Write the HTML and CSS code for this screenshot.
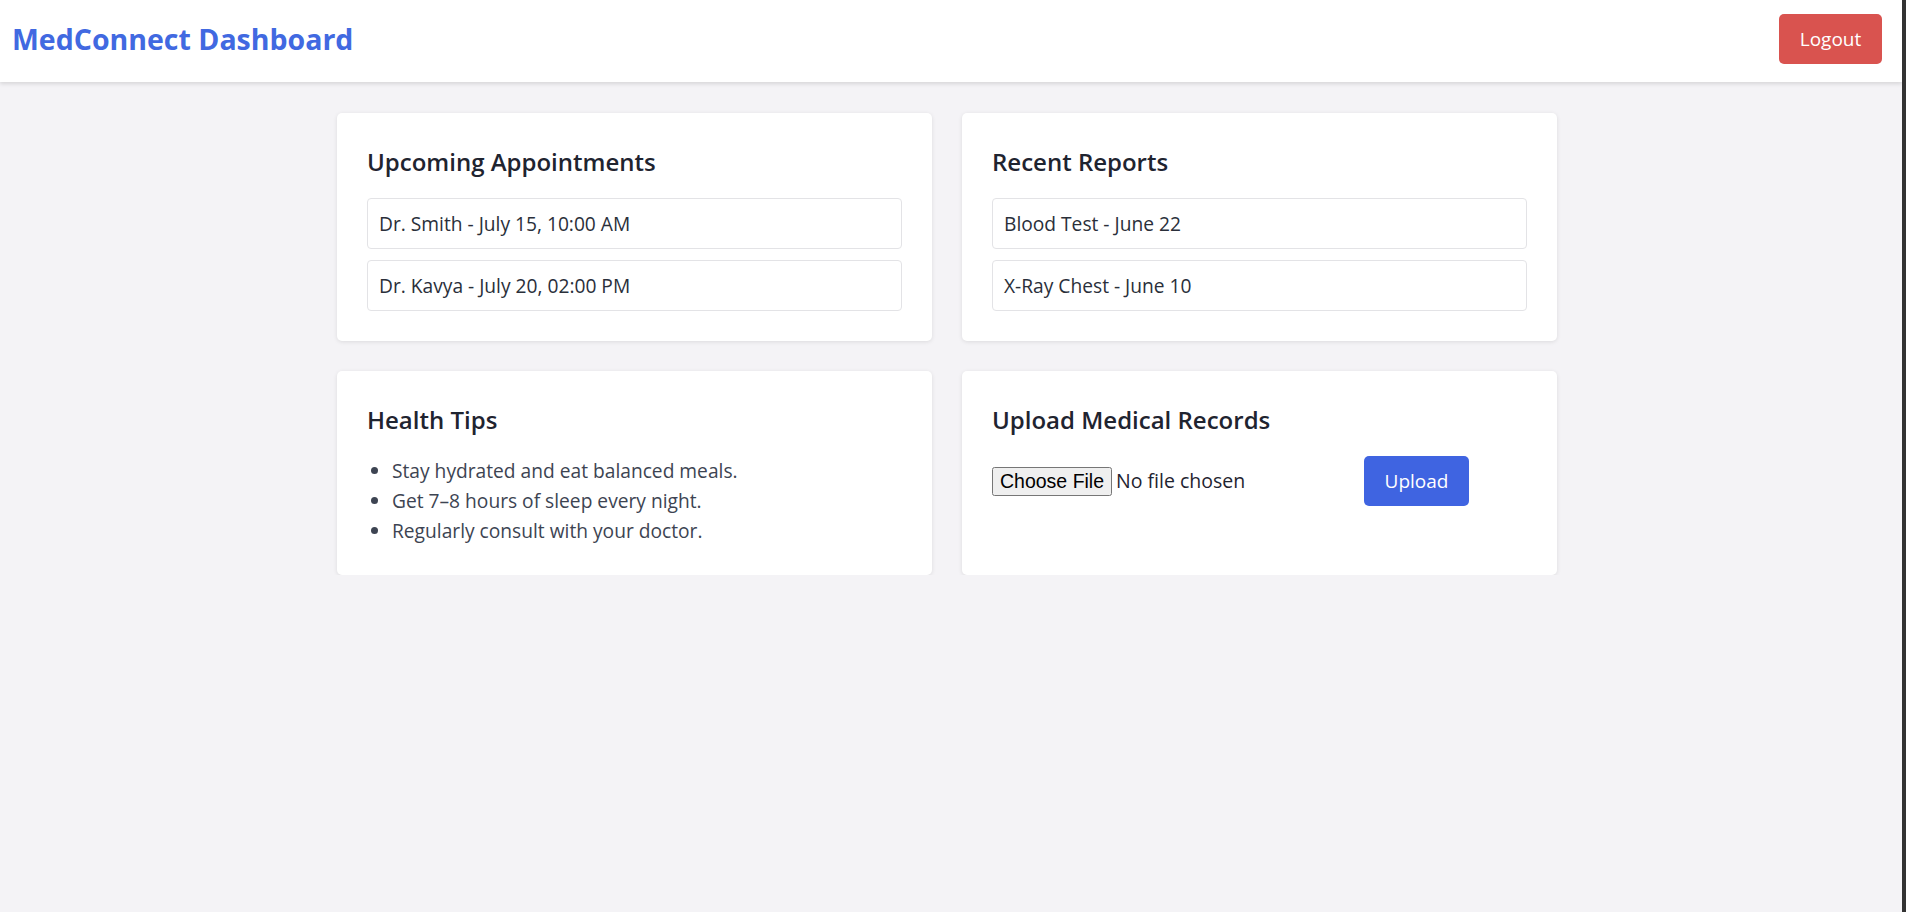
FILE: index.html
```html
<!DOCTYPE html>
<html lang="en">
<head>
<meta charset="utf-8">
<title>MedConnect Dashboard</title>
<link rel="stylesheet" href="styles.css">
</head>
<body>
  <header class="topbar">
    <h1 class="brand">MedConnect Dashboard</h1>
    <button class="btn btn-logout" type="button">Logout</button>
  </header>
  <main class="container">
    <section class="card">
      <h3 class="card-title">Upcoming Appointments</h3>
      <div class="item">Dr. Smith - July 15, 10:00 AM</div>
      <div class="item">Dr. Kavya - July 20, 02:00 PM</div>
    </section>
    <section class="card">
      <h3 class="card-title">Recent Reports</h3>
      <div class="item">Blood Test - June 22</div>
      <div class="item">X-Ray Chest - June 10</div>
    </section>
    <section class="card">
      <h3 class="card-title">Health Tips</h3>
      <ul class="tips">
        <li>Stay hydrated and eat balanced meals.</li>
        <li>Get 7–8 hours of sleep every night.</li>
        <li>Regularly consult with your doctor.</li>
      </ul>
    </section>
    <section class="card">
      <h3 class="card-title">Upload Medical Records</h3>
      <form class="upload-row">
        <input class="file-input" type="file">
        <button class="btn btn-upload" type="button">Upload</button>
      </form>
    </section>
  </main>
</body>
</html>
```

FILE: styles.css
```css
html {
  min-height: 100%;
  box-sizing: border-box;
  border-right: 4px solid #333333;
  background: #f4f3f6;
}

body {
  margin: 0;
  font-family: "Open Sans", "Noto Sans", sans-serif;
  background: #f4f3f6;
  color: #212529;
}

.topbar {
  height: 82px;
  box-sizing: border-box;
  background: #ffffff;
  box-shadow: 0 2px 4px rgba(0, 0, 0, 0.12);
  display: flex;
  align-items: center;
  justify-content: space-between;
  padding: 0 20px 5px 12px;
}

.brand {
  margin: 0;
  font-size: 28.5px;
  font-weight: 700;
  color: #4169e1;
  line-height: 36px;
}

.btn {
  border: none;
  border-radius: 5px;
  color: #ffffff;
  font-family: inherit;
  font-size: 19px;
  height: 50px;
  padding: 0 25px;
  cursor: pointer;
}

.btn-logout {
  background: #d9534f;
  width: 103px;
  padding: 0;
}

.container {
  width: 1220px;
  margin: 0 0 0 337px;
  padding-top: 31px;
  display: grid;
  grid-template-columns: 595px 595px;
  gap: 30px;
}

.card {
  background: #ffffff;
  border-radius: 5px;
  box-shadow: 0 1px 4px rgba(0, 0, 0, 0.1);
  padding: 30px;
}

.card-title {
  margin: 4px 0 21px;
  font-size: 24px;
  font-weight: 600;
  line-height: 30px;
  color: #1f2430;
}

.item {
  border: 1px solid #e3e3e6;
  border-radius: 4px;
  padding: 12px 11px;
  font-size: 19.2px;
  line-height: 25px;
  color: #2a2f3a;
  margin-bottom: 11px;
}

.item:last-child {
  margin-bottom: 0;
}

.tips {
  margin: 1px 0 -1px;
  padding: 0 0 0 25px;
  font-size: 19.2px;
  line-height: 30px;
  color: #3d4452;
}

.upload-row {
  margin: 0;
  display: flex;
  align-items: center;
}

.file-input {
  width: 362px;
  font-family: inherit;
  font-size: 19.5px;
  color: #1f2430;
}

.btn-upload {
  background: #3f64e1;
  width: 105px;
  padding: 0;
  margin-left: 10px;
}
```
